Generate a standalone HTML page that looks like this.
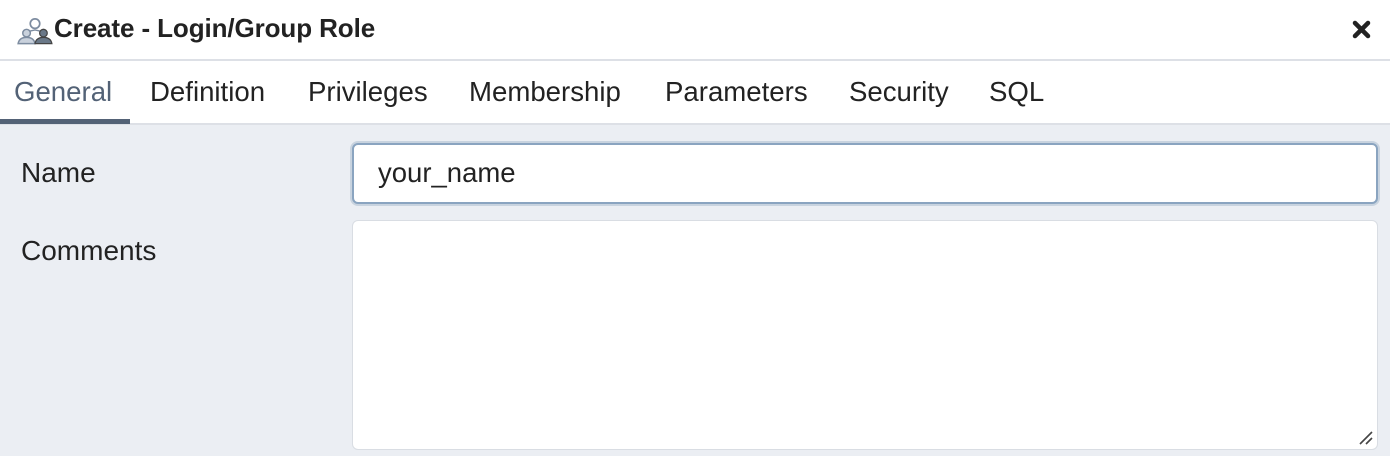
<!DOCTYPE html>
<html><head><style>
*{box-sizing:border-box;margin:0;padding:0}
body{width:1390px;height:456px;overflow:hidden;background:#ebeef3;font-family:"Liberation Sans",sans-serif;color:#222}
.hdr{position:absolute;left:0;top:0;width:1390px;height:61px;background:#fff;border-bottom:2px solid #dde0e6}
.title{position:absolute;left:54px;top:13px;font-size:26px;font-weight:bold;color:#222;letter-spacing:-0.1px}
.tabs{position:absolute;left:0;top:61px;width:1390px;height:64px;background:#fff;border-bottom:2px solid #dde0e6}
.tab{position:absolute;top:15px;font-size:27.6px;color:#222}
.ul{position:absolute;left:0;top:58px;width:130px;height:5px;background:#536276}
.lbl{position:absolute;left:21px;font-size:28px;color:#222}
.inp{position:absolute;left:352px;top:143px;width:1026px;height:61px;background:#fff;border:2px solid #8aa4c0;border-radius:6px;box-shadow:0 0 0 2px #c8d3df}
.inp span{position:absolute;left:24px;top:12px;font-size:27.5px;color:#222}
.ta{position:absolute;left:352px;top:220px;width:1026px;height:230px;background:#fff;border:1px solid #d9dde3;border-radius:6px}
</style></head><body>
<div class="hdr">
<svg style="position:absolute;left:16px;top:17px" width="38" height="28" viewBox="0 0 36 26">
<circle cx="18" cy="6" r="4.5" fill="#fff" stroke="#7d8ca0" stroke-width="1.6"/>
<path d="M9 14 L18 12 L27 14" fill="none" stroke="#7d8ca0" stroke-width="1.4"/>
<circle cx="10" cy="15" r="3.6" fill="#c9d1dc" stroke="#7d8ca0" stroke-width="1.4"/>
<path d="M2 25 Q3 19 10 19 Q17 19 18 25 Z" fill="#c9d1dc" stroke="#7d8ca0" stroke-width="1.4"/>
<circle cx="26" cy="15" r="3.6" fill="#6a7888" stroke="#444" stroke-width="1.2"/>
<path d="M18 25 Q19 19 26 19 Q33 19 34 25 Z" fill="#6a7888" stroke="#444" stroke-width="1.2"/>
</svg>
<div class="title">Create - Login/Group Role</div>
<svg style="position:absolute;left:1352px;top:20px" width="19" height="19" viewBox="0 0 19 19"><path d="M3 3 L16 16 M16 3 L3 16" stroke="#222" stroke-width="4.5" stroke-linecap="round"/></svg>
</div>
<div class="tabs">
<div class="tab" style="left:14px;color:#536276">General</div>
<div class="tab" style="left:150px">Definition</div>
<div class="tab" style="left:308px">Privileges</div>
<div class="tab" style="left:469px">Membership</div>
<div class="tab" style="left:665px">Parameters</div>
<div class="tab" style="left:849px">Security</div>
<div class="tab" style="left:989px">SQL</div>
<div class="ul"></div>
</div>
<div class="lbl" style="top:157px">Name</div>
<div class="lbl" style="top:235px">Comments</div>
<div class="inp"><span>your_name</span></div>
<div class="ta"><svg style="position:absolute;right:4px;bottom:4px" width="14" height="14" viewBox="0 0 14 14"><path d="M1 13 L13 1 M7 13 L13 7" stroke="#444" stroke-width="1.6"/></svg></div>
</body></html>
